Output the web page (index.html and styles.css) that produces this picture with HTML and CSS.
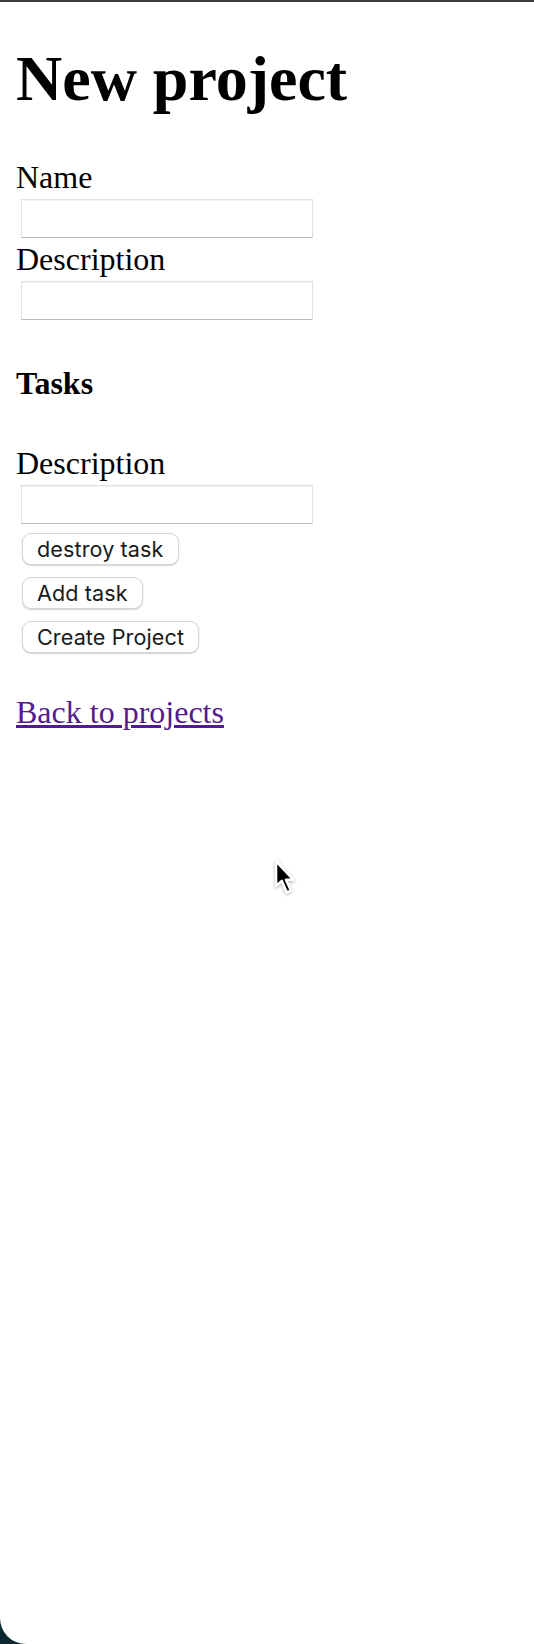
FILE: index.html
```html
<!DOCTYPE html>
<html lang="en">
<head>
<meta charset="utf-8">
<title>New project</title>
<link rel="stylesheet" href="styles.css">
</head>
<body>
<main class="window">
  <h1 class="title">New project</h1>

  <form class="project-form" action="#" method="post">
    <div class="field">
      <label class="field-label" for="project_name">Name</label>
      <input class="text-input" type="text" id="project_name" name="project[name]">
    </div>

    <div class="field">
      <label class="field-label" for="project_description">Description</label>
      <input class="text-input" type="text" id="project_description" name="project[description]">
    </div>

    <h4 class="section-title">Tasks</h4>

    <div class="task">
      <div class="field">
        <label class="field-label" for="task_description">Description</label>
        <input class="text-input" type="text" id="task_description" name="project[tasks_attributes][0][description]">
      </div>
    </div>

    <div class="actions">
      <button class="btn" type="button">destroy task</button>
      <button class="btn" type="button">Add task</button>
      <button class="btn" type="submit">Create Project</button>
    </div>
  </form>

  <div class="back">
    <a class="back-link" href="#">Back to projects</a>
  </div>

  <svg class="pointer" width="27" height="42" viewBox="-3 -3 27 42" aria-hidden="true">
    <path d="M0 0 L0 25 L5.8 20 L10.8 31.5 L15 29.8 L10 18.8 L17.5 18.8 Z"
          fill="#000" stroke="#fff" stroke-width="2.6" stroke-linejoin="round"/>
  </svg>
</main>
</body>
</html>
```

FILE: styles.css
```css
html {
  background: #0d2830;
}

body {
  margin: 0;
}

.window {
  position: relative;
  box-sizing: border-box;
  min-height: 1644px;
  padding: 0 16px;
  background: #fff;
  border-top: 2px solid #3c3c3c;
  border-bottom-left-radius: 26px;
  font-family: "Liberation Serif", "Times New Roman", serif;
  font-size: 32px;
  color: #000;
  overflow: hidden;
}

.title {
  margin: 40px 0 43px;
  font-size: 64px;
  line-height: 74px;
  font-weight: bold;
}

.project-form {
  margin: 0;
}

.field-label {
  display: block;
  line-height: 37px;
}

.text-input {
  display: block;
  box-sizing: border-box;
  width: 292px;
  height: 39px;
  margin: 3px 0 3px 5px;
  padding: 0 6px;
  border: 1px solid #e2e2e2;
  border-bottom-color: #b9b9b9;
  border-radius: 0;
  background: #fff;
  box-shadow: inset 0 1px 0 #f4f4f4;
  font-size: 22px;
}

.section-title {
  margin: 45px 0 42.5px;
  font-size: 32px;
  line-height: 37px;
  font-weight: bold;
}

.actions {
  display: flex;
  flex-direction: column;
  align-items: flex-start;
  gap: 12px;
  padding-top: 6px;
}

.btn {
  box-sizing: border-box;
  height: 32px;
  margin: 0 0 0 6px;
  padding: 0 14px;
  border: 1px solid #d6d6d6;
  border-radius: 9px;
  background: #fff;
  box-shadow: 0 1px 1.5px rgba(0, 0, 0, 0.18);
  font-family: Inter, "Liberation Sans", sans-serif;
  font-size: 21.6px;
  line-height: 30px;
  color: #1a1a1a;
  letter-spacing: 0.1px;
}

.back {
  margin-top: 41px;
  line-height: 37px;
}

.back-link {
  color: #551a8b;
}

.pointer {
  position: absolute;
  left: 273px;
  top: 856px;
  filter: drop-shadow(0 1px 1.5px rgba(0, 0, 0, 0.3));
}
```
